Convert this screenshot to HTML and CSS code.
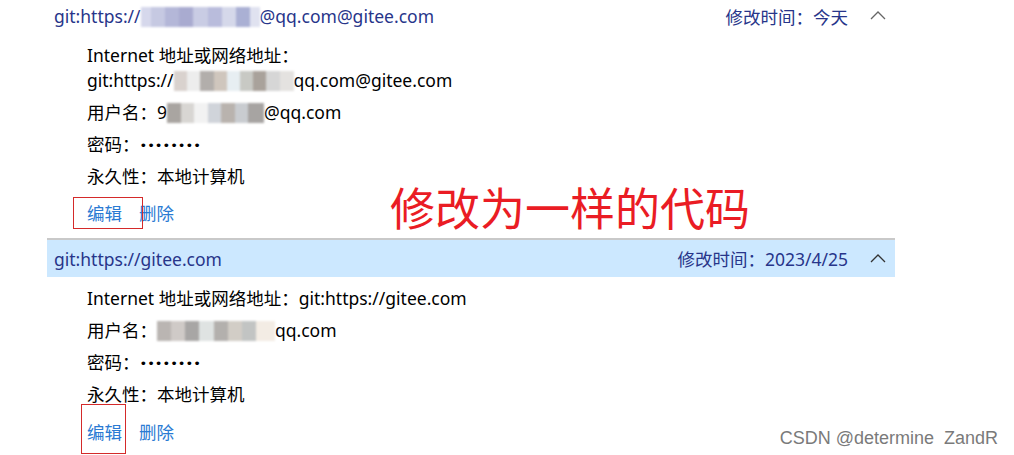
FILE: index.html
```html
<!DOCTYPE html>
<html lang="zh-CN">
<head>
<meta charset="utf-8">
<title>凭据管理器</title>
<link rel="stylesheet" href="styles.css">
</head>
<body>
<div class="page">
  <div class="list">
    <section class="cred">
      <div class="cred-head first">
        <span class="cred-name">git:https://<span class="blur blur-blue"></span>@qq.com@gitee.com</span>
        <span class="cred-time">修改时间：今天</span>
        <svg class="chev" width="16" height="10" viewBox="0 0 16 10"><polyline points="1,9 8,2 15,9" fill="none" stroke="#666" stroke-width="1.3"/></svg>
      </div>
      <div class="cred-body">
        <div class="field wrap">Internet 地址或网络地址：<span class="val">git:https://<span class="blur blur-a"></span>qq.com@gitee.com</span></div>
        <div class="field">用户名：9<span class="blur blur-b"></span>@qq.com</div>
        <div class="field">密码：<span class="dots">••••••••</span></div>
        <div class="field">永久性：本地计算机</div>
        <div class="actions">
          <a class="link">编辑</a><a class="link">删除</a>
          <span class="mark mark-1"></span>
        </div>
      </div>
    </section>
    <section class="cred">
      <div class="cred-head selected">
        <span class="cred-name">git:https://gitee.com</span>
        <span class="cred-time">修改时间：2023/4/25</span>
        <svg class="chev" width="16" height="10" viewBox="0 0 16 10"><polyline points="1,9 8,2 15,9" fill="none" stroke="#333" stroke-width="1.3"/></svg>
      </div>
      <div class="cred-body second">
        <div class="field">Internet 地址或网络地址：<span class="val">git:https://gitee.com</span></div>
        <div class="field">用户名：<span class="blur blur-c"></span>qq.com</div>
        <div class="field">密码：<span class="dots">••••••••</span></div>
        <div class="field">永久性：本地计算机</div>
        <div class="actions">
          <a class="link">编辑</a><a class="link">删除</a>
          <span class="mark mark-2"></span>
        </div>
      </div>
    </section>
  </div>
  <div class="note">修改为一样的代码</div>
  <div class="watermark">CSDN @determine&nbsp;&nbsp;ZandR</div>
</div>
</body>
</html>
```
FILE: styles.css
```css
html, body {
  margin: 0;
  padding: 0;
  background: #fff;
}
.page {
  position: relative;
  width: 1014px;
  height: 455px;
  overflow: hidden;
  font-family: "Noto Sans", "Noto Sans CJK SC", sans-serif;
  font-size: 17.5px;
  color: #000;
}
.list {
  margin-left: 47px;
  width: 848px;
  margin-top: -3px;
}
.cred-head {
  height: 38px;
  display: flex;
  align-items: center;
  padding: 0 9px 0 7px;
  color: #27358a;
}
.cred-head.selected {
  height: 37px;
  background: #cce8ff;
  border-top: 2px solid #c9c9c9;
}
.cred-name {
  flex: 1;
  white-space: nowrap;
}
.cred-time {
  margin-right: 22px;
}
.chev {
  display: block;
  margin-top: -2px;
}
.cred-body {
  padding: 8px 0 12px 40px;
}
.cred-body.second {
  padding-top: 9px;
}
.field {
  line-height: 25px;
  margin-bottom: 7px;
  max-width: 440px;
}
.val {
  white-space: nowrap;
}
.dots {
  font-family: "DejaVu Sans", sans-serif;
  font-size: 13px;
  line-height: 1;
  vertical-align: 1px;
}
.actions {
  position: relative;
  line-height: 25px;
  margin-top: 12px;
  display: flex;
  gap: 17px;
}
.second .actions {
  margin-top: 13px;
}
.link {
  color: #2a7bd3;
}
.mark {
  position: absolute;
  border: 1px solid #d42a2a;
}
.mark-1 {
  left: -14px;
  top: -4px;
  width: 68px;
  height: 30px;
}
.mark-2 {
  left: -6px;
  top: -16px;
  width: 43px;
  height: 48px;
}
.blur {
  display: inline-block;
  height: 20px;
  vertical-align: -4px;
  filter: blur(1.2px);
}
.blur-blue {
  width: 119px;
  background:
    linear-gradient(90deg, #d6d8ec 0 8%, #c6c9e2 8% 20%, #b4b7d8 20% 32%, #a9abd0 32% 44%, #c9cce4 44% 56%, #b9bcdc 56% 68%, #d5d8ea 68% 80%, #aab0d4 80% 92%, #e0e2f0 92%);
}
.blur-a {
  width: 120px;
  background:
    linear-gradient(90deg, #d9d2ce 0 11%, #ededed 11% 22%, #b2aeab 22% 33%, #cfc6bd 33% 44%, #e7eef2 44% 55%, #c8c9c4 55% 66%, #a9a29b 66% 77%, #d6d6d6 77% 88%, #e4e2e0 88% 100%);
}
.blur-b {
  width: 97px;
  background:
    linear-gradient(90deg, #a9a5a1 0 14%, #d8d6d3 14% 28%, #f2f2f2 28% 42%, #d0d4da 42% 56%, #b9b3ae 56% 70%, #c9ccd0 70% 84%, #a7a4a2 84% 100%);
}
.blur-c {
  width: 118px;
  background:
    linear-gradient(90deg, #bab5b2 0 12%, #cfcac7 12% 24%, #a8a6a5 24% 36%, #dfe3e2 36% 48%, #b3b0ad 48% 60%, #d2cdc6 60% 72%, #c2c4c3 72% 84%, #f3ece4 84% 100%);
}
.note {
  position: absolute;
  left: 390px;
  top: 178px;
  font-size: 45px;
  line-height: 58px;
  color: #ea1c24;
  font-family: "Noto Sans CJK SC", sans-serif;
}
.watermark {
  position: absolute;
  right: 16px;
  bottom: 6px;
  font-family: "Liberation Sans", Arial, sans-serif;
  font-size: 18px;
  color: #7a7a7a;
}
```
